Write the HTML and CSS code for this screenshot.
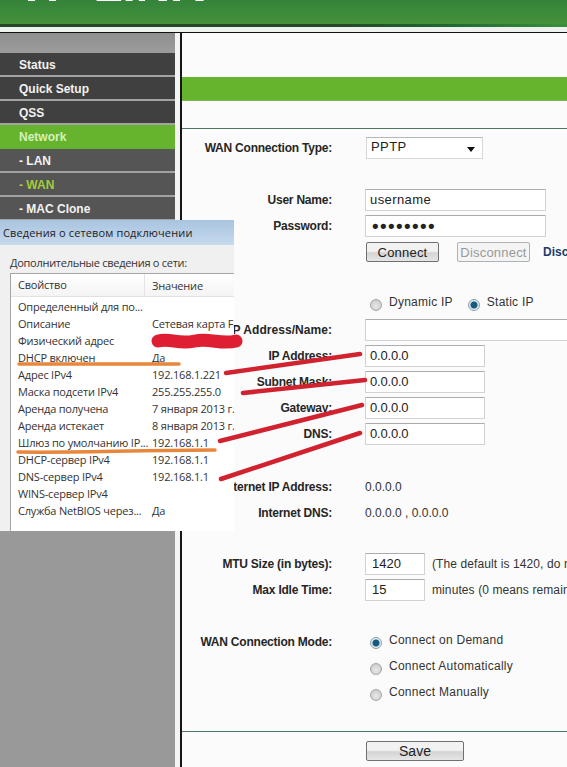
FILE: index.html
```html
<!DOCTYPE html>
<html lang="en">
<head>
<meta charset="utf-8">
<title>WAN</title>
<link rel="stylesheet" href="styles.css">
</head>
<body>
<div class="page">
  <header class="header"><div class="logo">TP-LINK</div></header>
  <div class="header-rule"></div>
  <div class="header-gap"></div>
  <div class="content">
    <nav class="sidebar">
      <div class="side-top"></div>
      <div class="item">Status</div>
      <div class="item">Quick Setup</div>
      <div class="item">QSS</div>
      <div class="item active">Network</div>
      <div class="item sub">- LAN</div>
      <div class="item sub current">- WAN</div>
      <div class="item sub">- MAC Clone</div>
    </nav>
    <div class="side-gap"></div>
    <main class="main">
      <div class="green-bar"></div>
      <div class="form">
        <div class="row"><div class="label">WAN Connection Type:</div><div class="select"><span>PPTP</span><svg class="caret" width="8" height="5" viewBox="0 0 8 5"><path d="M0 0h8L4 5z" fill="#111"/></svg></div></div>
        <div class="row mt26"><div class="label">User Name:</div><input class="input long" value="username"></div>
        <div class="row"><div class="label">Password:</div><input class="input long pw" type="password" value="12345678"></div>
        <div class="row"><div class="label"></div>
          <button class="btn connect">Connect</button>
          <button class="btn disconnect" disabled>Disconnect</button>
          <span class="status">Disconnected!</span>
        </div>
        <div class="row mt26 radios"><div class="label"></div>
          <span class="radio"></span><span class="opt">Dynamic IP</span>
          <span class="radio on second"></span><span class="opt">Static IP</span>
        </div>
        <div class="row"><div class="label loose">Server IP Address/Name:</div><input class="input full"></div>
        <div class="row"><div class="label">IP Address:</div><input class="input ip" value="0.0.0.0"></div>
        <div class="row"><div class="label">Subnet Mask:</div><input class="input ip" value="0.0.0.0"></div>
        <div class="row"><div class="label">Gateway:</div><input class="input ip" value="0.0.0.0"></div>
        <div class="row"><div class="label">DNS:</div><input class="input ip" value="0.0.0.0"></div>
        <div class="row mt27"><div class="label">Internet IP Address:</div><span class="value">0.0.0.0</span></div>
        <div class="row"><div class="label">Internet DNS:</div><span class="value">0.0.0.0 , 0.0.0.0</span></div>
        <div class="row mt25"><div class="label">MTU Size (in bytes):</div><input class="input short" value="1420"><span class="note">(The default is 1420, do not change unless necessary.)</span></div>
        <div class="row"><div class="label">Max Idle Time:</div><input class="input short" value="15"><span class="note">minutes (0 means remain active at all times.)</span></div>
        <div class="row mt26"><div class="label">WAN Connection Mode:</div><span class="radio on mode"></span><span class="opt">Connect on Demand</span></div>
        <div class="row"><div class="label"></div><span class="radio mode"></span><span class="opt">Connect Automatically</span></div>
        <div class="row"><div class="label"></div><span class="radio mode"></span><span class="opt">Connect Manually</span></div>
      </div>
      <div class="save-row"><button class="btn save">Save</button></div>
    </main>
  </div>

  <section class="dialog">
    <div class="dialog-title">Сведения о сетевом подключении</div>
    <div class="dialog-body">
      <div class="dialog-caption">Дополнительные сведения о сети:</div>
      <div class="list">
        <div class="list-head"><span class="c1">Свойство</span><span class="c2">Значение</span></div>
        <div class="list-row"><span class="c1">Определенный для по...</span><span class="c2"></span></div>
        <div class="list-row"><span class="c1">Описание</span><span class="c2">Сетевая карта Fast Ethernet</span></div>
        <div class="list-row"><span class="c1">Физический адрес</span><span class="c2"></span></div>
        <div class="list-row"><span class="c1">DHCP включен</span><span class="c2">Да</span></div>
        <div class="list-row"><span class="c1">Адрес IPv4</span><span class="c2">192.168.1.221</span></div>
        <div class="list-row"><span class="c1">Маска подсети IPv4</span><span class="c2">255.255.255.0</span></div>
        <div class="list-row"><span class="c1">Аренда получена</span><span class="c2">7 января 2013 г.</span></div>
        <div class="list-row"><span class="c1">Аренда истекает</span><span class="c2">8 января 2013 г.</span></div>
        <div class="list-row"><span class="c1">Шлюз по умолчанию IP...</span><span class="c2">192.168.1.1</span></div>
        <div class="list-row"><span class="c1">DHCP-сервер IPv4</span><span class="c2">192.168.1.1</span></div>
        <div class="list-row"><span class="c1">DNS-сервер IPv4</span><span class="c2">192.168.1.1</span></div>
        <div class="list-row"><span class="c1">WINS-сервер IPv4</span><span class="c2"></span></div>
        <div class="list-row"><span class="c1">Служба NetBIOS через...</span><span class="c2">Да</span></div>
      </div>
    </div>
  </section>

  <svg class="marks" width="567" height="767" viewBox="0 0 567 767" fill="none" stroke-linecap="round">
    <path d="M158 341C172 338 178 345 195 341C210 338 222 345 236 341" stroke="#de1f33" stroke-width="13"/>
    <g stroke="#d1222f" stroke-width="4.5">
      <path d="M226 373L360 354"/>
      <path d="M243 393L365 380"/>
      <path d="M220 441L362 405"/>
      <path d="M221 479L360 433"/>
    </g>
    <g stroke="#e8873c" stroke-width="3.5">
      <path d="M19 364L179 364"/>
      <path d="M18 452C80 453 150 450 215 450"/>
    </g>
  </svg>
</div>
</body>
</html>
```
FILE: styles.css
```css
html, body { margin: 0; padding: 0; overflow: hidden; background: #fbfbfb; }
* { box-sizing: border-box; }
.page {
  position: relative; width: 567px; height: 767px; overflow: hidden;
  display: flex; flex-direction: column;
  font-family: "Liberation Sans", Arial, sans-serif; font-size: 12px; color: #222;
}
.header { height: 24px; flex: none; overflow: hidden; padding-left: 17px; background: linear-gradient(#35833a, #43913a); }
.logo { margin-top: -47px; font-size: 66px; line-height: 50px; font-weight: bold; color: #fff; white-space: nowrap; transform-origin: left; transform: scaleX(.72); }
.header-rule { height: 3px; flex: none; background: linear-gradient(to right, #27472a 60%, #1f6a35 80%, #3b8f3d); }
.header-gap { height: 5px; flex: none; background: #eef2ef; }
.content { flex: 1; display: flex; min-height: 0; border-top: 1px solid #111; }

.sidebar { width: 175px; flex: none; background: #999; }
.side-top { height: 20px; background: linear-gradient(#8f8f8f, #9c9c9c); }
.item {
  height: 24px; padding-left: 19px; line-height: 24px; font-weight: bold; color: #f2f2f2;
  background: #404040; border-bottom: 2px solid #a3a3a3;
}
.item.active { background: #66b32e; color: #d6f0bc; border-bottom-color: #66b32e; }
.item.sub { background: #555; }
.item.current { color: #a3cc3c; }
.side-gap { width: 5px; flex: none; background: #f4f4f4; }

.main { flex: 1; min-width: 0; overflow: hidden; background: #fbfbfb; border-left: 2px solid #151515; padding-top: 44px; }
.green-bar { height: 24px; background: #66b32e; border-bottom: 1px solid #79b95a; }
.form { margin-top: 27px; border-top: 1px solid #4d7560; padding-top: 6px; height: 604px; border-bottom: 1px solid #4d7560; }
.row { height: 26px; display: flex; align-items: center; white-space: nowrap; }
.mt26 { margin-top: 26px; }
.mt27 { margin-top: 27px; }
.mt25 { margin-top: 25px; }
.label { width: 150px; flex: none; margin-right: 33px; display: flex; justify-content: flex-end; font-weight: bold; color: #262626; white-space: nowrap; letter-spacing: -.22px; }
.label.loose { letter-spacing: .05px; }

.input {
  height: 22px; padding: 0 4px 2px; border: 1px solid #cfd3d6; border-top-color: #a9adb0; background: #fff;
  font-family: "Liberation Sans", Arial, sans-serif; font-size: 13px; color: #222; flex: none; outline: none; border-radius: 1px;
}
.long { width: 181px; letter-spacing: .4px; }
.pw { font-family: "DejaVu Sans", sans-serif; font-size: 18px; letter-spacing: -2.6px; padding: 0 4px; }
.full { width: 230px; }
.ip { width: 120px; letter-spacing: -.2px; }
.short { width: 60px; padding-left: 6px; }
.select {
  width: 117px; height: 22px; margin-left: 1px; padding: 0 7px 4px 4px; display: flex; align-items: center; justify-content: space-between;
  background: #fff; border: 1px solid #d6d8d8; border-top-color: #b5b8b8; font-size: 13px; letter-spacing: .4px;
}
.caret { margin-top: 6px; }
.btn {
  font-family: "Liberation Sans", Arial, sans-serif; font-size: 13px; height: 20px; padding: 0; flex: none;
  color: #222; border: 1px solid #707070; border-radius: 2px; background: linear-gradient(#f2f2f2 45%, #d4d4d4 55%, #e6e6e6);
}
.connect { width: 73px; margin-left: 1px; letter-spacing: .2px; }
.disconnect { width: 73px; margin-left: 18px; color: #9a9a9a; background: #f4f4f4; border-color: #adb2b5; letter-spacing: .2px; }
.status { margin-left: 13px; font-weight: bold; color: #1d3c6e; }
.opt { color: #333; margin-left: 7px; margin-top: -4px; letter-spacing: .25px; }
.radio {
  width: 12px; height: 12px; flex: none; border-radius: 50%; margin-top: 2px; border: 1px solid #a6a6a6;
  background: radial-gradient(circle at 50% 60%, #e8e8e8, #c4c4c4);
}
.radios .radio { margin-left: 5px; }
.radio.on { border-color: #8aa0ac; background: radial-gradient(circle, #17597f 0 3px, #dfe9ef 4px); }
.radios .radio.second { margin-left: 15px; }
.radio.mode { margin-left: 5px; }
.value { color: #333; }
.note { margin-left: 7px; color: #333; letter-spacing: .1px; }
.save-row { padding: 9px 0 0 184px; }
.save { width: 98px; font-size: 14px; }

.dialog { position: absolute; left: 0; top: 220px; width: 234px; height: 311px; overflow: hidden; background: #f0f0f0; color: #333; font-size: 11px; font-family: "Open Sans", "Liberation Sans", sans-serif; }
.dialog-title { height: 25px; line-height: 25px; padding-left: 3px; color: #222; background: linear-gradient(#a9c4e0, #c6d9ed); white-space: nowrap; letter-spacing: .13px; }
.dialog-body { padding: 9px 0 0 10px; }
.dialog-caption { height: 19px; line-height: 17px; white-space: nowrap; letter-spacing: -.28px; }
.list { width: 240px; height: 260px; background: #fff; border: 1px solid #a5a5a5; letter-spacing: -.2px; }
.list-head { height: 23px; display: flex; align-items: center; border-bottom: 1px solid #e2e2e2; background: linear-gradient(#fff, #f4f4f4); }
.list-head .c1 { border-right: 1px solid #e4e4e4; height: 100%; line-height: 22px; }
.list-row { height: 17px; line-height: 17px; display: flex; }
.list-head + .list-row { margin-top: 1px; }
.c1 { width: 134px; flex: none; padding-left: 7px; white-space: nowrap; }
.c2 { padding-left: 7px; white-space: nowrap; }

.marks { position: absolute; left: 0; top: 0; pointer-events: none; }
```
